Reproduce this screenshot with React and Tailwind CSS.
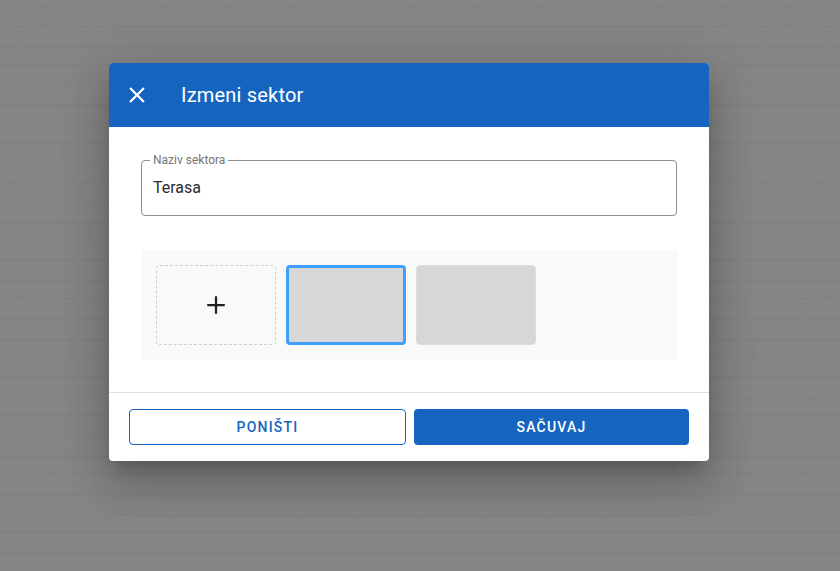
// faint brick texture behind the dialog
function BrickWall() {
  const lines = [];
  for (let row = 0; row < 30; row++) {
    const y = row * 19.5 + 6 + ((row * 7) % 3);
    lines.push(<path key={`h${row}`} d={`M0 ${y}H840`} stroke="#6b6b6b" strokeOpacity="0.13" strokeWidth="1.5" />);
    const offset = ((row * 37) % 60) - 20;
    for (let col = 0; col < 14; col++) {
      const x = col * 62 + offset + ((row * col * 13) % 11);
      lines.push(
        <path key={`v${row}-${col}`} d={`M${x} ${y}v19.5`} stroke="#6b6b6b" strokeOpacity="0.1" />
      );
    }
  }
  return (
    <svg className="absolute inset-0 w-full h-full" viewBox="0 0 840 571" aria-hidden="true">
      {lines}
    </svg>
  );
}

function Tile({ selected }) {
  if (selected) {
    return <div className="w-[120px] h-[80px] rounded-[4px] border-[3px] border-[#409eff] bg-[#d7d7d7]" />;
  }
  return <div className="w-[120px] h-[80px] rounded-[4px] border border-[#dddde1] bg-[#d7d7d7]" />;
}

export default function App() {
  return (
    <div className="relative w-[840px] h-[571px] overflow-hidden bg-[#858585] font-['Roboto',sans-serif]">
      <BrickWall />
      <div className="relative pl-[109px] pt-[63px]">
        <div className="w-[600px] rounded-[4px] bg-white overflow-hidden shadow-[0_11px_15px_-7px_rgba(0,0,0,0.2),0_24px_38px_3px_rgba(0,0,0,0.14),0_9px_46px_8px_rgba(0,0,0,0.12)]">
          <div className="h-[64px] bg-[#1565c0] flex items-center pl-[16px] text-white">
            <svg className="w-6 h-6 fill-current" viewBox="0 0 24 24">
              <path
                d="M19 6.41 17.59 5 12 10.59 6.41 5 5 6.41 10.59 12 5 17.59 6.41 19 12 13.41 17.59 19 19 17.59 13.41 12z"
                transform="translate(12 12) scale(1.1) translate(-12 -12)"
              />
            </svg>
            <h2 className="ml-[32px] text-[20px] leading-[32px] font-normal tracking-[0.2px]">Izmeni sektor</h2>
          </div>

          <div className="px-[32px] pt-[27px] pb-[32px]">
            <fieldset className="h-[62px] rounded-[4px] border border-[#8f8f8f] pl-[11px] pr-[11px] min-w-0">
              <legend className="ml-[-3px] px-[3px] text-[12px] leading-[12px] text-[#757575]">Naziv sektora</legend>
              <div className="pt-[10px] text-[16px] leading-[24px] text-[#2b2b2b]">Terasa</div>
            </fieldset>

            <div className="mt-[34px] h-[110px] bg-[#f9f9f9] p-[15px] flex gap-[10px]">
              <div className="w-[120px] h-[80px] rounded-[4px] border border-dashed border-[#cfcfcf] flex items-center justify-center text-[#212121]">
                <svg className="w-6 h-6 fill-current" viewBox="0 0 24 24">
                  <path d="M19 12.9h-6.1V19h-1.8v-6.1H5v-1.8h6.1V5h1.8v6.1H19z" transform="translate(12 12) scale(1.25) translate(-12 -12)" />
                </svg>
              </div>
              <Tile selected />
              <Tile />
            </div>
          </div>

          <div className="border-t border-[#e0e0e0] pt-[16px] pb-[16px] pl-[20px] pr-[20px] flex gap-[8px]">
            <button className="w-[277px] h-[36px] rounded-[4px] border border-[#1565c0] bg-white text-[#1565c0] text-[14px] font-medium tracking-[1.2px]">
              PONIŠTI
            </button>
            <button className="w-[275px] h-[36px] rounded-[4px] bg-[#1565c0] text-white text-[14px] font-medium tracking-[1.2px]">
              SAČUVAJ
            </button>
          </div>
        </div>
      </div>
    </div>
  );
}
